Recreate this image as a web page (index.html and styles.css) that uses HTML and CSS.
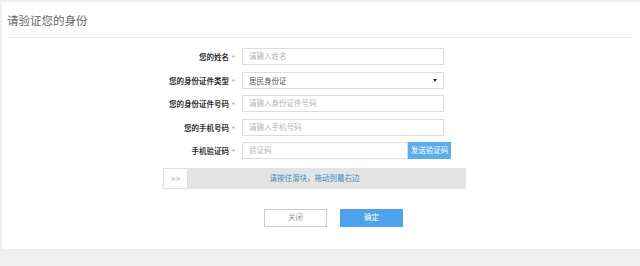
FILE: index.html
```html
<!DOCTYPE html>
<html lang="zh-CN">
<head>
    <meta charset="UTF-8">
    <title>请验证您的身份</title>
    <link rel="stylesheet" href="styles.css">
</head>
<body>
    <div class="panel">
        <div class="head">
            <h2>请验证您的身份</h2>
        </div>
        <div class="form">
            <div class="row">
                <label>您的姓名<i>*</i></label>
                <input class="ipt" type="text" placeholder="请输入姓名">
            </div>
            <div class="row">
                <label>您的身份证件类型<i>*</i></label>
                <div class="ipt select">
                    <span>居民身份证</span>
                    <b class="arrow"></b>
                </div>
            </div>
            <div class="row">
                <label>您的身份证件号码<i>*</i></label>
                <input class="ipt" type="text" placeholder="请输入身份证件号码">
            </div>
            <div class="row">
                <label>您的手机号码<i>*</i></label>
                <input class="ipt" type="text" placeholder="请输入手机号码">
            </div>
            <div class="row">
                <label>手机验证码<i>*</i></label>
                <input class="ipt code" type="text" placeholder="验证码">
                <a class="sendBtn">发送验证码</a>
            </div>
            <div class="slider">
                <div class="handle">&gt;&gt;</div>
                <div class="track">请按住滑块，拖动到最右边</div>
            </div>
            <div class="btnGroup">
                <a class="btn btnClose">关闭</a>
                <a class="btn btnOk">确定</a>
            </div>
        </div>
    </div>
</body>
</html>
```

FILE: styles.css
```css
html, body {
    margin: 0;
    padding: 0;
    width: 100%;
    height: 100%;
    background: #efefef;
    font-family: "Liberation Sans", "Noto Sans CJK SC", sans-serif;
}
a {
    text-decoration: none;
}
.panel {
    margin: 2px 0 0 2px;
    height: 247px;
    background: #fff;
}
.head {
    margin: 0 8px 0 5px;
    height: 35px;
    border-bottom: 1px solid #eeeeee;
}
.head h2 {
    margin: 0;
    line-height: 38px;
    font-size: 11.5px;
    font-weight: normal;
    color: #666;
}
.form {
    margin-left: 161px;
    padding-top: 10px;
}
.row {
    display: flex;
    align-items: center;
    height: 17px;
    margin-bottom: 6.5px;
}
.row label {
    width: 72px;
    margin-right: 7px;
    text-align: right;
    font-size: 7.5px;
    font-weight: bold;
    color: #333;
    white-space: nowrap;
}
.row label i {
    font-style: normal;
    font-weight: normal;
    color: #d77;
    margin-left: 3px;
}
.ipt {
    box-sizing: border-box;
    width: 202px;
    height: 17px;
    margin: 0;
    padding: 0 6px;
    border: 1px solid #ddd;
    font-family: inherit;
    font-size: 7.5px;
    color: #555;
    outline: none;
}
.ipt::placeholder {
    color: #b5b5b5;
}
.select {
    display: flex;
    align-items: center;
    justify-content: space-between;
}
.select .arrow {
    width: 0;
    height: 0;
    border-left: 2px solid transparent;
    border-right: 2px solid transparent;
    border-top: 3px solid #222;
}
.ipt.code {
    width: 166px;
}
.sendBtn {
    display: block;
    width: 43px;
    height: 17px;
    line-height: 17px;
    text-align: center;
    background: #5aaeea;
    color: #fff;
    font-size: 7.5px;
}
.slider {
    display: flex;
    width: 303px;
    height: 21px;
    margin-top: 9px;
    background: #e4e4e4;
}
.handle {
    box-sizing: border-box;
    width: 25px;
    height: 21px;
    line-height: 19px;
    border: 1px solid #ddd;
    background: #fff;
    color: #999;
    font-size: 8px;
    text-align: center;
}
.track {
    flex: 1;
    line-height: 21px;
    text-align: center;
    padding-right: 25px;
    color: #3c8cbd;
    font-size: 7.5px;
}
.btnGroup {
    display: flex;
    gap: 13px;
    margin-top: 20px;
    padding-left: 101px;
}
.btn {
    box-sizing: border-box;
    display: block;
    width: 63px;
    height: 18px;
    line-height: 16px;
    text-align: center;
    font-size: 7.5px;
}
.btnClose {
    border: 1px solid #ccc;
    color: #999;
    background: #fff;
}
.btnOk {
    border: 1px solid #4da3eb;
    background: #4da3eb;
    color: #fff;
}
```
